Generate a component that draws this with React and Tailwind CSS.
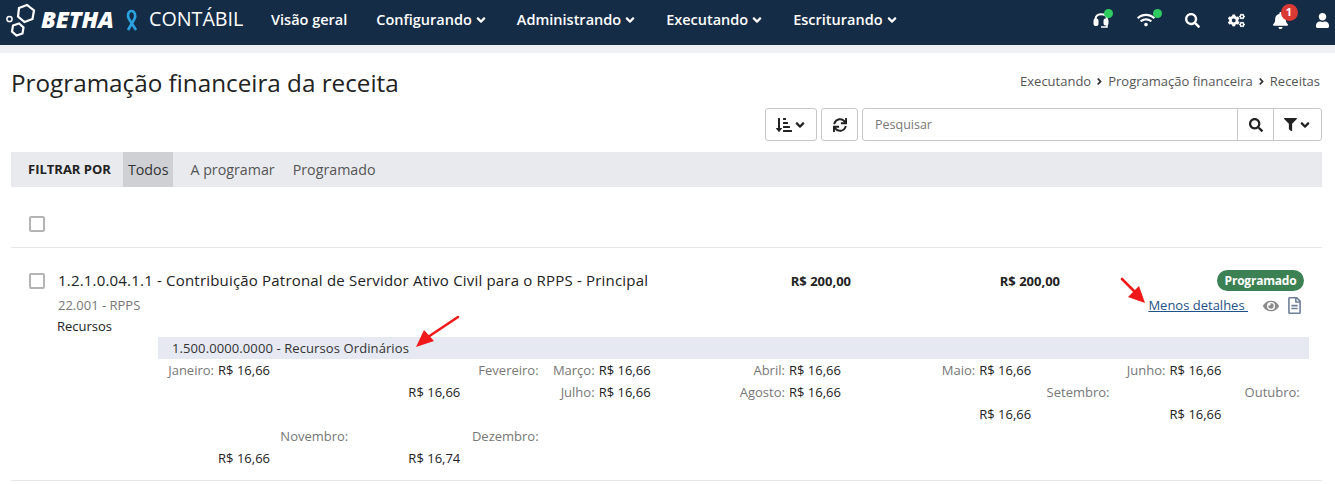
import {FaAngleDown, FaAngleRight, FaBell, FaCogs, FaEye, FaFilter, FaRegFileAlt, FaSearch, FaSortAmountDownAlt, FaSync, FaUser, FaWifi} from "react-icons/fa";

const months = [
    [["Janeiro:", "R$ 16,66"], ["Fevereiro:", null], ["Março:", "R$ 16,66"], ["Abril:", "R$ 16,66"], ["Maio:", "R$ 16,66"], ["Junho:", "R$ 16,66"]],
    [[null, null], [null, "R$ 16,66"], ["Julho:", "R$ 16,66"], ["Agosto:", "R$ 16,66"], ["Setembro:", null], ["Outubro:", null]],
    [[null, null], [null, null], [null, null], [null, null], [null, "R$ 16,66"], [null, "R$ 16,66"]],
    [["Novembro:", null], ["Dezembro:", null], [null, null], [null, null], [null, null], [null, null]],
    [[null, "R$ 16,66"], [null, "R$ 16,74"], [null, null], [null, null], [null, null], [null, null]],
];

const navItems = [
    {label: "Visão geral"},
    {label: "Configurando", caret: true},
    {label: "Administrando", caret: true},
    {label: "Executando", caret: true},
    {label: "Escriturando", caret: true},
];

const Logo = () => (
    <svg width="32" height="34" viewBox="0 0 32 34" fill="none" stroke="#fff" className="shrink-0">
        <path d="M14 5 L22 2 L29 7.5 L27.5 16 L19.5 19 L13 13.5 Z" strokeWidth="2.2" />
        <path d="M8 22.5 L14 20.5 L18.5 24.5 L17.5 30.5 L11.5 32.5 L7 28.5 Z" strokeWidth="2.2" />
        <circle cx="4.5" cy="16" r="2.6" strokeWidth="1.5" />
    </svg>
);

const Ribbon = () => (
    <svg width="16" height="22" viewBox="0 0 16 22" fill="none" stroke="#2ba3e0" strokeWidth="2.6" className="shrink-0">
        <path d="M4 21 L10.5 10 C12 7 11 2 7.5 2 C4 2 3 7 5 10 L12 21" />
    </svg>
);

const Headset = () => (
    <svg width="18" height="18" viewBox="0 0 18 18" fill="none" stroke="#fff" strokeWidth="2" className="block">
        <path d="M2.5 11 V8 C2.5 1.5 14 1.5 14 8" />
        <rect x="1.5" y="8.5" width="3" height="5.5" rx="1" fill="#fff" />
        <rect x="11.5" y="8.5" width="3" height="5" rx="1" fill="#fff" />
        <path d="M14 13 V16 H8" strokeWidth="1.5" />
    </svg>
);

const Arrow = ({className, d, head}) => (
    <svg className={className} width="48" height="40" viewBox="0 0 48 40" fill="none">
        <path d={d} stroke="#f01818" strokeWidth="2.6" strokeLinecap="round" />
        <polygon points={head} fill="#f01818" />
    </svg>
);

const Header = () => (
    <header className="h-[45px] pb-[5px] bg-[#152c47] flex items-center text-white">
        <div className="pl-[5px] flex items-center w-[271px] shrink-0">
            <Logo />
            <span className="ml-[4px] w-[75px] italic font-extrabold text-[23.5px] tracking-[-0.2px]">BETHA</span>
            <span className="ml-[8px]"><Ribbon /></span>
            <span className="ml-[9px] text-[19.7px] -mt-[3px]">CONTÁBIL</span>
        </div>
        <nav className="flex items-center gap-[29px] text-[14.5px] font-semibold">
            {navItems.map((item) => (
                <span key={item.label} className="flex items-center gap-[2px]">
                    {item.label}
                    {item.caret && <FaAngleDown size={14} />}
                </span>
            ))}
        </nav>
        <div className="ml-auto flex items-center">
            <span className="relative flex mr-[26px]">
                <Headset />
                <span className="absolute -top-[2.5px] -right-[1.5px] w-[9px] h-[9px] rounded-full bg-[#2ecc5f]" />
            </span>
            <span className="relative flex mr-[30px]">
                <FaWifi size={18} />
                <span className="absolute -top-[2.5px] -right-[6.5px] w-[9px] h-[9px] rounded-full bg-[#2ecc5f]" />
            </span>
            <span className="flex mr-[28px]"><FaSearch size={15} /></span>
            <span className="flex mr-[27px]"><FaCogs size={17} /></span>
            <span className="relative flex mr-[26px]">
                <FaBell size={17} />
                <span className="absolute -top-[8px] left-[8.5px] w-[17px] h-[17px] rounded-full bg-[#db3a34] text-[11px] font-bold flex items-center justify-center">1</span>
            </span>
            <span className="flex mr-[5px]"><FaUser size={15} /></span>
        </div>
    </header>
);

const Toolbar = () => (
    <div className="mt-[9px] pr-[13px] flex justify-end text-[#222]">
        <button className="w-[52px] h-[33px] border border-[#c8c8c8] rounded-[3px] flex items-center justify-center gap-[1px]">
            <FaSortAmountDownAlt size={16} /><FaAngleDown size={14} />
        </button>
        <button className="ml-[4px] w-[37px] h-[33px] border border-[#c8c8c8] rounded-[3px] flex items-center justify-center">
            <FaSync size={14} />
        </button>
        <div className="ml-[4px] flex-1 max-w-[460px] h-[33px] border border-[#c8c8c8] rounded-[3px] flex items-center">
            <span className="flex-1 pl-[12px] pt-[1px] text-[12.5px] text-[#777]">Pesquisar</span>
            <span className="w-[36px] h-full border-l border-[#c8c8c8] flex items-center justify-center"><FaSearch size={14} /></span>
            <span className="w-[48px] h-full border-l border-[#c8c8c8] flex items-center justify-center gap-[1px]"><FaFilter size={13} /><FaAngleDown size={14} /></span>
        </div>
    </div>
);

const MonthCell = ({label, value}) => {
    if (label && !value) {
        return <div className="text-right text-[#777]">{label}</div>;
    }
    return (
        <div className="flex">
            <span className="w-[56px] text-right text-[#777] whitespace-nowrap">{label}</span>
            <span className="w-[56px] text-right text-[#222] whitespace-nowrap">{value}</span>
        </div>
    );
};

export default function App() {
    return (
        <div className="font-['Open_Sans',sans-serif] bg-white h-[484px] overflow-hidden">
            <Header />
            <div className="h-[8px] bg-[#eef0f3]" />
            <div className="pl-[11px] pr-[15px] pt-[13px] flex items-center justify-between">
                <h1 className="text-[24.25px] leading-[33px] text-[#222]">Programação financeira da receita</h1>
                <div className="text-[13px] text-[#555] -mt-[2px] flex items-center gap-[3px]">
                    Executando <FaAngleRight size={11} className="text-[#333]" /> Programação financeira <FaAngleRight size={11} className="text-[#333]" /> Receitas
                </div>
            </div>
            <Toolbar />
            <div className="mt-[11px] ml-[11px] mr-[13px] h-[35px] bg-[#e9eaee] flex items-center text-[14.25px] text-[#555]">
                <span className="ml-[17px] text-[13px] font-bold text-[#222]">FILTRAR POR</span>
                <span className="ml-[12px] h-full px-[5px] bg-[#cfd0d4] text-[#333] flex items-center">Todos</span>
                <span className="ml-[17px]">A programar</span>
                <span className="ml-[18px]">Programado</span>
            </div>
            <div className="ml-[11px] mr-[13px] h-[61px] border-b border-[#e6e6e6] pl-[18px] pt-[14px] flex items-center">
                <span className="w-[16px] h-[16px] border-2 border-[#b4b4b4] rounded-[2px]" />
            </div>
            <div className="relative ml-[11px] mr-[13px] h-[233px] border-b border-[#e6e6e6]">
                <div className="flex pt-[22px]">
                    <span className="ml-[18px] mt-[3px] w-[16px] h-[16px] border-2 border-[#b4b4b4] rounded-[2px] shrink-0" />
                    <div className="ml-[13px] w-[680px] text-[15px] tracking-[0.19px] leading-[21px] text-[#222] whitespace-nowrap shrink-0">1.2.1.0.04.1.1 - Contribuição Patronal de Servidor Ativo Civil para o RPPS - Principal</div>
                    <div className="w-[113px] text-right text-[13px] font-bold leading-[22px] text-[#222] shrink-0">R$ 200,00</div>
                    <div className="w-[209px] text-right text-[13px] font-bold leading-[22px] text-[#222] shrink-0">R$ 200,00</div>
                    <div className="flex-1 flex flex-col items-end pr-[18px]">
                        <span className="h-[21px] px-[7.5px] rounded-full bg-[#3c8153] text-white text-[12px] font-bold tracking-[-0.2px] flex items-center">Programado</span>
                        <div className="mt-[5px] flex items-center text-[#8a8a8a]">
                            <span className="text-[13px] text-[#1f5288] underline whitespace-nowrap">Menos detalhes&nbsp;</span>
                            <FaEye size={16} className="ml-[15px]" />
                            <FaRegFileAlt size={17} className="ml-[7px] mr-[1px] text-[#6f7f9a]" />
                        </div>
                    </div>
                </div>
                <div className="ml-[47px] -mt-[20px] text-[13px] leading-[18px] text-[#777]">22.001 - RPPS</div>
                <div className="ml-[46px] mt-[3px] text-[13px] leading-[18px] text-[#222]">Recursos</div>
                <div className="ml-[147px] mr-[13px] mt-[2px] h-[22px] bg-[#e6e9f2] pl-[14px] text-[13px] tracking-[0.1px] leading-[22px] text-[#333]">1.500.0000.0000 - Recursos Ordinários</div>
                <div className="ml-[147px] grid grid-cols-[repeat(6,190.3px)] text-[13px] leading-[22px]">
                    {months.flatMap((row, r) => row.map(([label, value], c) => (
                        <MonthCell key={`${r}-${c}`} label={label} value={value} />
                    )))}
                </div>
                <Arrow className="absolute left-[403px] top-[62px]" d="M44 7 L14 27" head="2,37 10,20 20,31" />
                <Arrow className="absolute left-[1096px] top-[23px]" d="M15 8 L30 23" head="38,32 21,26 32,15" />
            </div>
        </div>
    );
}
